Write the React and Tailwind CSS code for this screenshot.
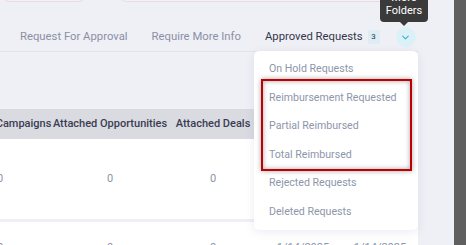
import { ChevronDown } from "lucide-react";

const tabs = ["Request For Approval", "Require More Info"];

const folders = [
  "On Hold Requests",
  "Reimbursement Requested",
  "Partial Reimbursed",
  "Total Reimbursed",
  "Rejected Requests",
  "Deleted Requests",
];

// column widths, first one starts off-screen
const cols = [
  { label: "Attached Campaigns", w: "w-[104px]" },
  { label: "Attached Opportunities", w: "w-[116px]" },
  { label: "Attached Deals", w: "w-[90px]" },
  { label: "Created On", w: "w-[90px]" },
  { label: "Modified On", w: "w-[64px]" },
];

export default function App() {
  return (
    <div className="relative flex h-[245px] w-[466px] overflow-hidden bg-[#eff0f5] font-['Roboto',sans-serif]">
      <div className="w-[454px] shrink-0">
        {/* search inputs, only the bottom edge is visible */}
        <div className="flex h-[2px] gap-[29px]">
          <div className="-mt-[30px] h-[32px] w-[88px] rounded-b-[10px] border border-[#ead9e0] bg-[#f2f2f6]" />
          <div className="-mt-[30px] h-[32px] w-[290px] rounded-b-[10px] border border-[#ead9e0] bg-[#f2f2f6]" />
        </div>

        {/* tabs */}
        <div className="flex h-[50px] w-[418px] items-end border-b border-[#e2e3ea]">
          <div className="flex h-[28px] shrink-0 items-center gap-[24px] whitespace-nowrap pl-[20px] text-[11.3px]">
            {tabs.map((t) => (
              <span key={t} className="text-[#8a8fa6]">
                {t}
              </span>
            ))}
            <span className="flex items-center gap-[5px] text-[#34364a]">
              Approved Requests
              <span className="flex h-[14px] w-[12px] items-center justify-center rounded-[2px] bg-[#dcedf4] text-[8px] text-[#34364a]">
                3
              </span>
            </span>
          </div>
          <div className="mb-[4px] ml-[16px] flex h-[20px] w-[20px] shrink-0 items-center justify-center rounded-full bg-[#dcf1f7]">
            <ChevronDown className="h-[11px] w-[11px] text-[#38b3d6]" strokeWidth={2.5} />
          </div>
        </div>

        <div className="h-[57px]" />

        {/* table */}
        <div className="-ml-[52px] w-[470px]">
          <div className="flex h-[30px] items-center bg-[#d9dbe1] text-[11px] font-medium text-[#3b3d52]">
            {cols.map((c) => (
              <div key={c.label} className={`${c.w} shrink-0 whitespace-nowrap text-center`}>
                {c.label}
              </div>
            ))}
          </div>
          <div className="flex h-[80px] items-center bg-white text-[11px] text-[#8c93ab]">
            {cols.map((c, i) => (
              <div key={c.label} className={`${c.w} shrink-0 text-center`}>
                {i < 3 ? "0" : "1/14/2025"}
              </div>
            ))}
          </div>
          <div className="h-[3px]" />
          <div className="flex h-[40px] items-start bg-white pt-[18px] text-[11px] text-[#8c93ab]">
            {cols.map((c, i) => (
              <div key={c.label} className={`${c.w} shrink-0 text-center`}>
                {i < 3 ? "0" : "1/14/2025"}
              </div>
            ))}
          </div>
        </div>
      </div>

      {/* scrollbar */}
      <div className="w-[12px] shrink-0 bg-[#5f5f5f]" />

      {/* tooltip */}
      <div className="absolute left-[380px] top-[-15px] flex h-[37px] w-[48px] flex-col items-center justify-center rounded-[4px] bg-[#3a3a3a] text-[11px] leading-[13px] text-white">
        <span>More</span>
        <span>Folders</span>
        <div className="absolute -bottom-[4px] left-[20px] h-0 w-0 border-x-[4px] border-t-[4px] border-x-transparent border-t-[#3a3a3a]" />
      </div>

      {/* folders dropdown */}
      <div className="absolute left-[254px] top-[51px] flex h-[179px] w-[164px] flex-col rounded-[5px] bg-white py-[4px] shadow-[0_2px_10px_rgba(90,100,160,0.12)]">
        {folders.map((f) => (
          <div key={f} className="flex h-[28.5px] items-center px-[15px] text-[10.6px] text-[#8d96aa]">
            {f}
          </div>
        ))}
      </div>

      {/* highlight box */}
      <div className="absolute left-[261px] top-[79px] h-[92px] w-[151px] border-2 border-[#c00000] shadow-[0_0_5px_rgba(0,0,0,0.35),inset_0_0_5px_rgba(0,0,0,0.35)]" />
    </div>
  );
}
